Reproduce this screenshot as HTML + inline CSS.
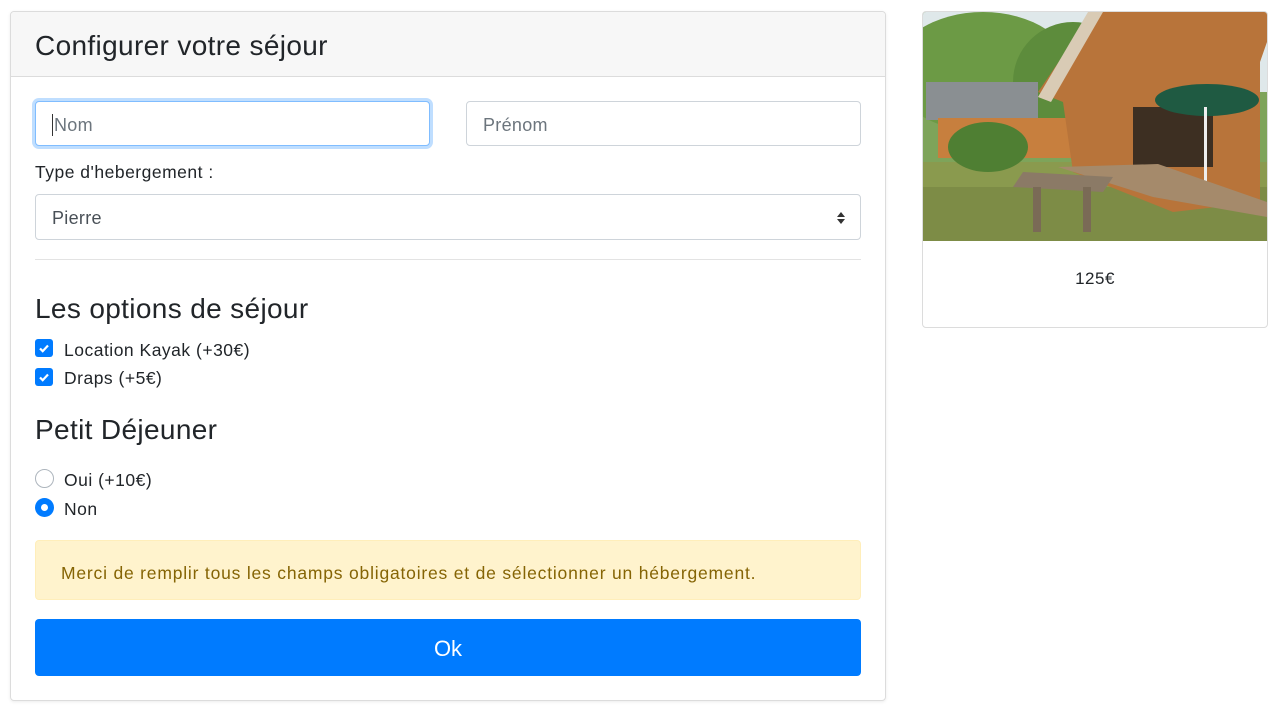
<!DOCTYPE html>
<html><head><meta charset="utf-8"><style>
*{box-sizing:border-box;margin:0;padding:0}
body{width:1284px;height:726px;background:#fff;font-family:"Liberation Sans",sans-serif;color:#212529;position:relative;overflow:hidden}
.abs{position:absolute}
.card{border:1px solid #dcdcdc;border-radius:4px}
.inp{border:1px solid #ced4da;border-radius:4px;background:#fff;font-size:18px;color:#6c757d;padding-left:16px;padding-top:3px;display:flex;align-items:center;letter-spacing:.3px}
.t{font-size:17.5px;white-space:nowrap;letter-spacing:.5px}
.h{font-size:28px;letter-spacing:.35px}
.cb{width:18px;height:18px;border-radius:3px;background:#007bff}
.rd{width:19px;height:19px;border-radius:50%}
</style></head><body>
<div class="abs card" style="left:10px;top:11px;width:876px;height:690px;box-shadow:0 1px 3px rgba(0,0,0,.08)"></div>
<div class="abs" style="left:11px;top:12px;width:874px;height:65px;background:#f7f7f7;border-bottom:1px solid #dcdcdc;border-radius:4px 4px 0 0"></div>
<div class="abs h" style="left:35px;top:30px">Configurer votre séjour</div>

<div class="abs inp" style="left:35px;top:101px;width:395px;height:45px;border-color:#80bdff;box-shadow:0 0 0 3px rgba(0,123,255,.25)"><span style="border-left:1px solid #333;height:22px;margin-right:1px"></span>Nom</div>
<div class="abs inp" style="left:466px;top:101px;width:395px;height:45px">Prénom</div>
<div class="abs t" style="left:35px;top:162px">Type d'hebergement :</div>
<div class="abs inp" style="left:35px;top:194px;width:826px;height:46px;color:#495057">Pierre
<svg class="abs" style="right:14px;top:16px" width="10" height="14" viewBox="0 0 10 14"><path d="M5 1L9 6H1Z M5 13L9 8H1Z" fill="#333"/></svg></div>
<div class="abs" style="left:35px;top:259px;width:826px;border-top:1px solid #e3e3e3"></div>

<div class="abs h" style="left:35px;top:293px">Les options de séjour</div>
<div class="abs cb" style="left:35px;top:339px"><svg width="18" height="18" viewBox="0 0 18 18"><path d="M5 9.5l2.7 2.7L13 6.5" stroke="#fff" stroke-width="2.2" fill="none"/></svg></div>
<div class="abs t" style="left:64px;top:340px">Location Kayak (+30€)</div>
<div class="abs cb" style="left:35px;top:368px"><svg width="18" height="18" viewBox="0 0 18 18"><path d="M5 9.5l2.7 2.7L13 6.5" stroke="#fff" stroke-width="2.2" fill="none"/></svg></div>
<div class="abs t" style="left:64px;top:368px">Draps (+5€)</div>

<div class="abs h" style="left:35px;top:414px">Petit Déjeuner</div>
<div class="abs rd" style="left:35px;top:469px;border:1px solid #adb5bd"></div>
<div class="abs t" style="left:64px;top:470px">Oui (+10€)</div>
<div class="abs rd" style="left:35px;top:498px;background:#007bff"><div style="width:7px;height:7px;background:#fff;border-radius:50%;margin:6px"></div></div>
<div class="abs t" style="left:64px;top:499px">Non</div>

<div class="abs" style="left:35px;top:540px;width:826px;height:60px;background:#fff3cd;border:1px solid #ffeeba;border-radius:4px;color:#856404;font-size:17.5px;letter-spacing:.8px;white-space:nowrap;padding:22px 0 0 25px">Merci de remplir tous les champs obligatoires et de sélectionner un hébergement.</div>
<div class="abs" style="left:35px;top:619px;width:826px;height:57px;background:#007bff;border-radius:4px;color:#fff;font-size:22px;padding-top:3px;display:flex;align-items:center;justify-content:center">Ok</div>

<div class="abs card" style="left:922px;top:11px;width:346px;height:317px"></div>
<svg class="abs" style="left:923px;top:12px;border-radius:3px 3px 0 0" width="344" height="229" viewBox="0 0 344 229">
<rect width="344" height="229" fill="#7ea45a"/>
<rect width="344" height="80" fill="#dfe8ea"/>
<ellipse cx="60" cy="60" rx="90" ry="60" fill="#6c9a45"/>
<ellipse cx="150" cy="70" rx="60" ry="60" fill="#5d8c3c"/>
<rect y="150" width="344" height="79" fill="#8a9a4e"/>
<rect y="175" width="344" height="54" fill="#7d8c46"/>
<polygon points="3,70 115,70 115,108 3,108" fill="#8a8f92"/>
<rect x="15" y="106" width="140" height="40" fill="#c77f3e"/>
<ellipse cx="65" cy="135" rx="40" ry="25" fill="#4f7f33"/>
<polygon points="115,80 170,0 344,0 344,30 337,50 337,190 250,200 150,160 140,90" fill="#b8743a"/>
<polygon points="115,85 165,0 180,0 128,90" fill="#d9cbb5"/>
<rect x="210" y="95" width="80" height="60" fill="#3d2f22"/>
<ellipse cx="284" cy="88" rx="52" ry="16" fill="#1f5a42"/>
<rect x="281" y="95" width="3" height="80" fill="#eee"/>
<polygon points="135,155 235,152 344,190 344,205 230,185" fill="#a58a6b"/>
<polygon points="100,160 190,165 180,180 90,175" fill="#8b7a66"/>
<rect x="110" y="175" width="8" height="45" fill="#7a6a56"/>
<rect x="160" y="175" width="8" height="45" fill="#7a6a56"/>
</svg>
<div class="abs t" style="left:922px;top:269px;width:346px;text-align:center;font-size:17px">125€</div>
</body></html>
